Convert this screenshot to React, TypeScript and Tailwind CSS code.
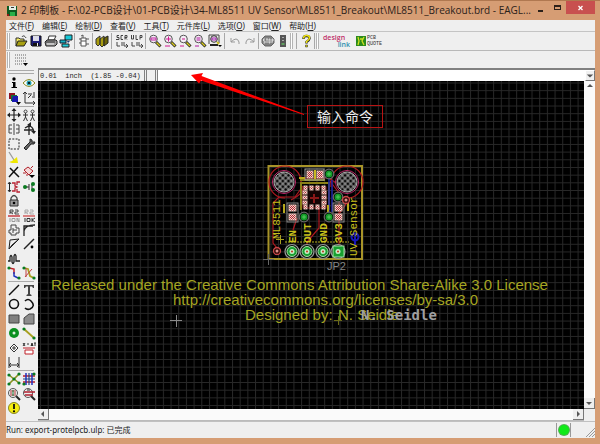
import type { FC, ReactNode } from "react";

type Glyph = { label: string; art: ReactNode };

const menus = [
  ["文件", "F"],
  ["编辑", "E"],
  ["绘制", "D"],
  ["查看", "V"],
  ["工具", "T"],
  ["元件库", "L"],
  ["选项", "O"],
  ["窗口", "W"],
  ["帮助", "H"],
];

const lens = (
  <>
    <path d="M8 8l4.5 4.5" stroke="#222" strokeWidth="3" />
    <path d="M8.5 8.5l3.5 3.5" stroke="#d8cc20" strokeWidth="1.4" />
    <circle cx="5.5" cy="5" r="3.8" fill="#f4eef6" stroke="#555" />
  </>
);

const fileTools: Glyph[] = [
  {
    label: "Open",
    art: (
      <>
        <path d="M2 12V4h3l1 1h4v2" fill="#f4ec60" stroke="#333" />
        <path d="M2 12l2-5h9l-3 5z" fill="#a8a010" stroke="#222" />
        <path d="M8 3c1-2 3-1 4 1" fill="none" stroke="#333" />
      </>
    ),
  },
  {
    label: "Save",
    art: (
      <>
        <path d="M2 2h10v10H3l-1-1z" fill="#1c1c78" stroke="#111" />
        <path d="M4 2h6v5H4z" fill="#dcdce8" />
        <path d="M4 9h6v3H4z" fill="#111" />
        <path d="M8 9h1v3H8z" fill="#eee" />
      </>
    ),
  },
  {
    label: "Print",
    art: (
      <>
        <path d="M4 6l1-4h7l-2 4z" fill="#fff" stroke="#333" />
        <path d="M1 8l2-2h9l1 1v3l-2 2H2z" fill="#999" stroke="#222" />
        <path d="M3 10h7" stroke="#eee" />
        <path d="M2 8h9" stroke="#333" />
      </>
    ),
  },
  {
    label: "CAM",
    art: (
      <>
        <path d="M6 1h7v5H6z" fill="#16c8d8" stroke="#222" />
        <path d="M1 6h6v3H1z" fill="#18b0c0" stroke="#123" />
        <path d="M3 10h7v3H3z" fill="#20d0dc" stroke="#222" />
        <path d="M8 7h3l-2 2z" fill="#103878" />
      </>
    ),
  },
];

const zoomTools: Glyph[] = [
  { label: "Fit", art: <>{lens}<path d="M3 4h5v2H3z" fill="none" stroke="#c020a0" /></> },
  { label: "Zoom in", art: <>{lens}<path d="M3 5h5M5.5 2.5v5M2 12h5" stroke="#d01890" /></> },
  { label: "Zoom out", art: <>{lens}<path d="M4 5h3M2 12h4" stroke="#d01890" /></> },
  { label: "Redraw", art: <>{lens}<path d="M3.5 4h4M3.5 6h4M2 12h4" stroke="#b018a0" /></> },
  {
    label: "Zoom select",
    art: (
      <>
        <path d="M1 10V1h10v8" fill="none" stroke="#444" />
        <circle cx="6" cy="5" r="3.3" fill="#eee" stroke="#333" />
        <path d="M4 4h4v2H4z" fill="none" stroke="#a020b0" />
        <path d="M2 11h8" stroke="#222" strokeWidth="2" />
        <path d="M9 8l2 2" stroke="#c8bc20" strokeWidth="2" />
        <path d="M10 11h4l-2 2z" />
      </>
    ),
  },
];

const node = (x: number, y: number, r = 1.6) => <circle cx={x} cy={y} r={r} fill="#0a7a20" />;

const infoTools: Glyph[] = [
  {
    label: "Info",
    art: <><circle cx="7" cy="3" r="1.7" /><path d="M5 6h3.500v5H10v1H4.500v-1H6V7H5z" /></>,
  },
  {
    label: "Show",
    art: (
      <>
        <path d="M1 7q6-7 12 0q-6 7-12 0z" fill="#fff" stroke="#8a8a20" />
        <circle cx="7" cy="7" r="2.5" fill="#20a0b0" />
        <circle cx="7" cy="7" r="1.1" />
      </>
    ),
  },
  {
    label: "Display",
    art: (
      <>
        <path d="M2 2h6v6H2z" fill="#901020" />
        <path d="M4 4h6v6H4z" fill="#107030" />
        <path d="M6 5h5v6H5V8z" fill="#1818b0" />
        <path d="M9 11h5l-2.500 3z" />
      </>
    ),
  },
  {
    label: "Mark",
    art: (
      <path
        d="M3 1v11h10M1 3l2-2 2 2M11 10l2 2-2 2M6 7l3-3M7 2v2M9 2v2M12 1v4M10 6h3"
        fill="none"
        stroke="#333"
      />
    ),
  },
];

const editTools: (Glyph | null)[] = [
  {
    label: "Move",
    art: (
      <>
        <path d="M7 2v10M2 7h10" stroke="#222" strokeWidth="1.2" />
        <path d="M7 0l2.500 3h-5zM7 14l2.500-3h-5zM0 7l3-2.500v5zM14 7l-3-2.500v5z" fill="#222" />
      </>
    ),
  },
  {
    label: "Copy",
    art: (
      <path
        d="M3.500 2a1.500 1.500 0 1 0 .1 0M10.500 2a1.500 1.500 0 1 0 .1 0M1 7h5M8 7h5M3.500 5v4l-2 4M3.500 9l2 4M10.500 5v4l-2 4M10.500 9l2 4"
        fill="none"
        stroke="#333"
      />
    ),
  },
  {
    label: "Mirror",
    art: <path d="M7 1v12M5 3H2v8h3M2 7h3M9 3h3v8H9M9 7h3" fill="none" stroke="#444" />,
  },
  {
    label: "Rotate",
    art: (
      <>
        <path d="M7 2v11M2 8h9M3 6q7-5 9 4" fill="none" stroke="#222" strokeWidth="1.3" />
        <path d="M5 3l4-3v5zM9 9h5l-2 3z" fill="#222" />
      </>
    ),
  },
  { label: "Group", art: <path d="M2 2h10v10H2z" fill="none" stroke="#222" strokeDasharray="2 1.3" /> },
  {
    label: "Change",
    art: <path d="M2 11l6-6V2l2 1 0 2 3 0-1 2H9l-5 6z" fill="#666" stroke="#222" />,
  },
  {
    label: "Paste",
    art: (
      <>
        <path d="M2 1l5 8" stroke="#999" strokeWidth="1.3" />
        <path d="M2 11l3-1 5-4 1 6H5z" fill="#f0e800" />
      </>
    ),
  },
  null,
  { label: "Delete", art: <path d="M3 3l9 9M11 2l-9 10" stroke="#111" strokeWidth="1.5" /> },
  {
    label: "Add",
    art: (
      <>
        <path d="M2 5l4-3 5 4-4 4zM1 8l3 0M5 11V9M9 3l2-2" fill="#f4d8d8" stroke="#b02028" />
        <path d="M7 10h6l-3 3z" />
      </>
    ),
  },
  {
    label: "Pin swap",
    art: (
      <>
        <path d="M2.500 3v8M1 4l1.500-2L4 4M1 10l1.500 2L4 10" fill="none" stroke="#222" />
        <path d="M5 3h3v3l2 1-2 1v3H5M13 2h-3v3M13 12h-3V9" fill="none" stroke="#b82030" strokeWidth="1.3" />
      </>
    ),
  },
  {
    label: "Replace",
    art: (
      <>
        <path d="M2 7h5M10 4v6M7 4v6" stroke="#555" strokeWidth="1.3" />
        {node(3, 7, 2)}
        {node(11, 4, 2)}
        {node(11, 10, 2)}
      </>
    ),
  },
  {
    label: "Lock",
    art: (
      <>
        <path d="M4 7V4q3-5 6 0v3" fill="none" stroke="#444" strokeWidth="1.3" />
        <path d="M3 6h8v6H3z" fill="#999" stroke="#333" />
        <circle cx="7" cy="9" r="1.3" />
      </>
    ),
  },
  null,
  {
    label: "Name",
    art: (
      <>
        <path d="M3 5V1h3v2H3l3 2M8 1h3v2H8v2h4" fill="none" stroke="#444" />
        <path d="M1 7h12" stroke="#c02028" strokeWidth="1.3" />
        <path d="M3 13V9M5 12.500V9.500h3v3zM10 13V9l2 4V9" fill="none" stroke="#999" />
      </>
    ),
  },
  {
    label: "Value",
    art: (
      <>
        <path d="M3 5V1h3v2H3l3 2M8 1h3v2H8v2h4" fill="none" stroke="#aaa" />
        <path d="M1 7h12" stroke="#d04848" strokeWidth="1.3" />
        <path d="M3 13V9M5 12.500V9.500h3v3zM10 9v4M13 9l-3 2 3 2" fill="none" stroke="#333" />
      </>
    ),
  },
  {
    label: "Smash",
    art: <path d="M4 4V2h5v3h3v5H9v2H4v-2H2V7h2zM6 7h4M6 5v5" fill="none" stroke="#444" />,
  },
  { label: "Miter", art: <path d="M2 13V8q1-6 11-6M2 13V3h9" fill="none" stroke="#222" strokeWidth="1.3" /> },
  {
    label: "Split",
    art: <path d="M2 12L3 3l9-1zM2 12l3-4 7-6" fill="none" stroke="#222" />,
  },
  {
    label: "Optimize",
    art: <><path d="M2 12L12 2" stroke="#222" strokeWidth="1.5" /><circle cx="10" cy="10" r="1.4" /></>,
  },
  {
    label: "Meander",
    art: <path d="M1 9h2V5q1-3 2 0v5q1 3 2 0V4q1-3 2 0v5h4" fill="none" stroke="#222" strokeWidth="1.3" />,
  },
  null,
  {
    label: "Route",
    art: (
      <>
        <path d="M2 2l5 1v5" fill="none" stroke="#c02028" strokeWidth="1.5" />
        <path d="M7 6v4l4 2" fill="none" stroke="#2038c0" strokeWidth="1.5" />
        {node(2, 2)}
        {node(12, 12)}
      </>
    ),
  },
  {
    label: "Ripup",
    art: (
      <>
        <path d="M2 2l4 1 2 7 4 2" fill="none" stroke="#a8a020" strokeWidth="1.8" />
        <path d="M4 2v9M10 3l-7 8" stroke="#c04040" />
        {node(2, 2)}
        {node(12, 12)}
      </>
    ),
  },
];

const drawTools: (Glyph | null)[] = [
  { label: "Wire", art: <path d="M2 12L12 2" stroke="#111" strokeWidth="1.5" /> },
  { label: "Text", art: <path d="M2 2h10v3h-1L10 3.500H8V11l1.500 1v1h-5v-1L6 11V3.500H4L3 5H2z" fill="#444" /> },
  { label: "Circle", art: <circle cx="7" cy="7" r="4.5" fill="none" stroke="#111" strokeWidth="1.6" /> },
  { label: "Arc", art: <path d="M3 4q3-3 6 0q5 5-1 8q-3 1-5-1" fill="none" stroke="#111" strokeWidth="1.6" /> },
  { label: "Rect", art: <path d="M2 3h10v8H2z" fill="#808080" stroke="#444" /> },
  { label: "Polygon", art: <path d="M2 12V6l5-4h5v10z" fill="#8c8c8c" stroke="#444" /> },
  {
    label: "Via",
    art: <><circle cx="7" cy="7" r="5" fill="#0a9020" /><circle cx="7" cy="7" r="1.5" fill="#dff0df" /></>,
  },
  {
    label: "Signal",
    art: <><path d="M2 3l10 9" stroke="#a8a020" strokeWidth="1.8" />{node(2, 3)}{node(12, 12)}</>,
  },
  {
    label: "Hole",
    art: <><path d="M7 3l4 4-4 4-4-4z" fill="#fff" stroke="#333" /><path d="M7 5v4M5 7h4" stroke="#333" /></>,
  },
  {
    label: "Attribute",
    art: (
      <>
        <path d="M1 2l2 3M1 5l2-3M5 3h2M9 5l1-3 1 3M12 2h2M13 2v3" stroke="#333" />
        <path d="M1 7h12" stroke="#c02028" />
        <path d="M3 9h8v4H3z" fill="#fff" stroke="#c02028" />
      </>
    ),
  },
  { label: "Dimension", art: <path d="M2 2v11M12 2v11M2 10h10M4 8l-2 2 2 2M10 8l2 2-2 2" fill="none" stroke="#333" /> },
  null,
];

const checkTools: (Glyph | null)[] = [
  {
    label: "Ratsnest",
    art: (
      <>
        <path d="M2 3l10 8M12 2L2 12" stroke="#8a9020" strokeWidth="1.6" />
        {node(2, 3)}
        {node(12, 2)}
        {node(2, 12)}
        {node(12, 11)}
        {node(7, 7)}
      </>
    ),
  },
  {
    label: "Auto",
    art: (
      <>
        <path d="M1 4h12M1 10h12" stroke="#c02028" strokeWidth="1.5" />
        <path d="M4 1v12M10 1v12" stroke="#2030c0" strokeWidth="1.5" />
        <path d="M7 1v12M1 7h12" stroke="#204890" strokeWidth="1.2" />
        {node(12, 2)}
        {node(2, 12)}
      </>
    ),
  },
  {
    label: "ERC",
    art: (
      <>
        <path d="M9 9l4 4" stroke="#222" strokeWidth="2" />
        <circle cx="6" cy="6" r="4.5" fill="#eee" stroke="#555" />
        <path d="M3 4h4M3 6h2M3 8h4M8 3v6" stroke="#b03038" />
        <path d="M6 3v6" stroke="#18803a" />
      </>
    ),
  },
  {
    label: "DRC",
    art: (
      <>
        <path d="M9 9l4 4" stroke="#222" strokeWidth="2" />
        <circle cx="6" cy="6" r="4.5" fill="#eee" stroke="#555" />
        <path d="M2 5h11M3 8h8" stroke="#b02030" strokeWidth="1.6" />
        <path d="M5 3h3" stroke="#222" />
      </>
    ),
  },
  {
    label: "Errors",
    art: (
      <>
        <circle cx="7" cy="7" r="5.5" fill="#f4ec10" stroke="#8a8820" />
        <path d="M7 3v5" stroke="#111" strokeWidth="1.8" />
        <circle cx="7" cy="10.3" r="1.1" />
      </>
    ),
  },
  null,
];

const ToolButton: FC<Glyph> = ({ label, art }) => (
  <button type="button" aria-label={label} className="flex h-3.5 w-[15px] items-center justify-center">
    <svg viewBox="0 0 14 14" className="size-3.5">
      {art}
    </svg>
  </button>
);

const Sep: FC<{ wide?: boolean }> = ({ wide }) => (
  <span className={wide ? "mx-0.5 h-4 w-px bg-[#a8a8a8]" : "mx-px h-4 w-px bg-[#a8a8a8]"} />
);

const Grip = () => <span className="h-4 w-[3px] border-x border-[#b4b4b4] bg-white" />;

const ToolGroup: FC<{ tools: (Glyph | null)[]; className: string }> = ({ tools, className }) => (
  <div className={`grid grid-cols-2 content-between ${className}`}>
    {tools.map((t, i) => (t ? <ToolButton key={t.label} {...t} /> : <span key={i} />))}
  </div>
);

const Via: FC<{ x: number; y: number }> = ({ x, y }) => (
  <g>
    <circle cx={x} cy={y} r="4.8" fill="#000" stroke="#6a6a6a" strokeWidth="1.2" />
    <circle cx={x} cy={y} r="3.5" fill="#129a28" />
    <path d={`M${x - 2} ${y}h4M${x} ${y - 2}v4`} stroke="#7adc7a" strokeWidth="0.6" />
  </g>
);

const Hole: FC<{ x: number; y: number }> = ({ x, y }) => (
  <g>
    <circle cx={x} cy={y} r="11.5" fill="#000" stroke="#c0286a" />
    <circle cx={x} cy={y} r="10" fill="url(#hatch)" stroke="#a8a8a8" />
  </g>
);

const Chip: FC<{ x: number; y: number; w: number; h: number }> = ({ x, y, w, h }) => (
  <g>
    <rect x={x} y={y} width={w} height={h} fill="#b8202a" stroke="#d8b8ac" />
    <rect x={x} y={y} width={w} height={h} fill="url(#weave)" />
  </g>
);

// Coordinates are in board space; the outer group moves them onto the canvas.
const Board = () => (
  <g transform="translate(-38 -81)">
    <rect x="268.5" y="166" width="93.5" height="93" fill="none" stroke="#a89428" strokeWidth="2" />
    <g fill="none" stroke="#b01820" strokeWidth="1.2">
      <path d="M285 198a16 16 0 1 1 16-16v5M347 198a16 16 0 1 0-16-16v5" />
      <path d="M277 248l-4-5v-40l6-6h16l8-11M339 245v-52l-9-12M319 208v20l-12 14v4M301 178h28l10 7" />
      <path d="M291 200q12-6 12-12M346 204l-7 10M297 218l-4 12" />
    </g>
    <path d="M301 210v-27h28v27M300 180h25" fill="none" stroke="#8a8018" strokeWidth="2" />
    <path d="M329 178v36M332 180v32" fill="none" stroke="#1820a8" strokeWidth="1.5" />
    <path d="M355 233v12" stroke="#1818b8" strokeWidth="2" />
    <circle cx="355" cy="237" r="3.5" fill="none" stroke="#1818b8" strokeWidth="2" />

    <Hole x={284} y={182} />
    <Hole x={347} y={182} />

    <rect x="303" y="187" width="23" height="21" fill="#140404" stroke="#8a1818" />
    {[304, 310, 316, 322].map((x) => (
      <g key={x}>
        <Chip x={x} y={186} w={3} h={4} />
        <Chip x={x} y={205} w={3} h={4} />
      </g>
    ))}
    {[191, 196, 201].map((y) => (
      <g key={y}>
        <Chip x={303} y={y} w={4} h={3} />
        <Chip x={322} y={y} w={4} h={3} />
      </g>
    ))}
    <path d="M314 194v9M310 198h9" stroke="#8a1818" strokeWidth="2" />
    <rect x="305" y="169" width="19" height="11" fill="none" stroke="#a0a0a0" />
    <Chip x={307} y={171} w={6} h={7} />
    <Chip x={317} y={171} w={6} h={7} />
    <path d="M315 170v9" stroke="#c8b820" strokeWidth="2" />
    <rect x="287" y="203" width="11" height="19" fill="none" stroke="#888" />
    <Chip x={289} y={205} w={7} h={6} />
    <Chip x={289} y={214} w={7} h={6} />
    <rect x="333" y="203" width="11" height="19" fill="none" stroke="#888" />
    <Chip x={335} y={205} w={7} h={6} />
    <Chip x={335} y={214} w={7} h={6} />
    <path d="M284 204v9M348 202v9M328 205v8M299 178h6" stroke="#b8a81c" strokeWidth="2" />

    <Via x={329} y={174} />
    <Via x={338} y={197} />
    <Via x={304} y={217} />
    <Via x={329} y={217} />
    {[
      [277, 251],
      [346, 200],
    ].map(([x, y]) => (
      <g key={x}>
        <circle cx={x} cy={y} r="3.5" fill="#300808" stroke="#c84848" strokeWidth="1.3" />
        <circle cx={x} cy={y} r="1.5" fill="#e09088" />
      </g>
    ))}

    <path d="M285 242h64" stroke="#b8b020" strokeDasharray="2 1" />
    {[292, 307, 323, 338].map((x) => (
      <g key={x}>
        <circle cx={x} cy="251.5" r="7" fill="#041004" stroke="#9a9a9a" strokeWidth="1.2" />
        {x === 338 ? (
          <rect x="333" y="246" width="11" height="11" fill="#18a030" stroke="#a8e0a8" />
        ) : (
          <circle cx={x} cy="251.5" r="5" fill="#18a030" stroke="#a8e0a8" />
        )}
        <circle cx={x} cy="251.5" r="2.5" fill="#c8ecc8" />
        <circle cx={x} cy="251.5" r="1" fill="#c03018" />
      </g>
    ))}

    <g fill="#c8c01c" fontFamily="'Liberation Mono', monospace" fontSize="11">
      <text transform="translate(280 239) rotate(-90)">ML8511</text>
      <text transform="translate(357 256) rotate(-90)">UV Sensor</text>
      <g fontWeight="bold">
        <text transform="translate(296 243) rotate(-90)">EN</text>
        <text transform="translate(311 243) rotate(-90)">OUT</text>
        <text transform="translate(327 243) rotate(-90)">GND</text>
        <text transform="translate(342 243) rotate(-90)">3V3</text>
      </g>
    </g>
    <text x="327" y="270" fill="#858585" fontFamily="'Liberation Sans', sans-serif" fontSize="11">
      JP2
    </text>
    <path d="M263 259.500h11M268.500 254v11" stroke="#666" />
    <path d="M276 239.500h8M280.500 235v9" stroke="#a8a020" />
    <path d="M170 320.500h12M176.500 315v12" stroke="#8a8a8a" />
    <path d="M334 320.500h8M338.500 316v9" stroke="#6a6a18" />

    <g fill="#a5a522" fontFamily="'Liberation Sans', Arial, sans-serif" fontSize="15">
      <text x="51" y="290">
        Released under the Creative Commons Attribution Share-Alike 3.0 License
      </text>
      <text x="173" y="305">http://creativecommons.org/licenses/by-sa/3.0</text>
      <text x="245" y="320">Designed by:</text>
      <text x="338" y="320">N. Seidle</text>
    </g>
    <text x="361" y="320" fill="#a0a0a0" fontFamily="'DejaVu Sans Mono', monospace" fontWeight="bold" fontSize="14">
      N. Seidle
    </text>
  </g>
);

const Canvas = () => (
  <svg className="min-w-0 flex-1 bg-black" role="img" aria-label="ML8511 Breakout board">
    <defs>
      <pattern id="grid" width="7.68" height="7.68" patternUnits="userSpaceOnUse" x="2" y="1.5">
        <path d="M0 0.500h7.680M0.500 0v7.680" stroke="#282828" />
      </pattern>
      <pattern id="hatch" width="4" height="4" patternUnits="userSpaceOnUse" patternTransform="rotate(45)">
        <rect width="4" height="4" fill="#080808" />
        <path d="M0 2h4M2 0v4" stroke="#b0b0b0" />
      </pattern>
      <pattern id="weave" width="2" height="2" patternUnits="userSpaceOnUse">
        <path d="M0 0h1v1H0zM1 1h1v1H1z" fill="#e8d8d0" />
      </pattern>
    </defs>
    <rect width="100%" height="100%" fill="url(#grid)" />
    <Board />
  </svg>
);

const Caret: FC<{ d: string }> = ({ d }) => (
  <svg viewBox="0 0 10 10" className="size-2.5">
    <path d={d} fill="#555" />
  </svg>
);

const TitleBar = () => (
  <header className="flex h-[19px] items-center">
    <svg viewBox="0 0 12 12" className="size-3">
      <path d="M1 1h10v10H1z" fill="#0c5a20" />
      <path d="M3 1h7v4H3z" fill="#e4ece4" />
      <path d="M4 7h5v4H4z" fill="#28b048" />
      <path d="M1 9h2v2H1z" fill="#901818" />
      <path d="M5 2h3v1H5z" fill="#333" />
    </svg>
    <h1 className="ml-[3px] min-w-0 flex-1 font-['Open_Sans','Noto_Sans_CJK_SC',sans-serif] text-[10px] leading-[19px] whitespace-nowrap text-[#2c211a]">
      2 印制板 - F:\02-PCB设计\01-PCB设计\34-ML8511 UV Sensor\ML8511_Breakout\ML8511_Breakout.brd - EAGL...
    </h1>
    <button type="button" aria-label="Minimize" className="flex h-4 w-4 items-center justify-center">
      <span className="h-0.5 w-[5px] bg-[#2c211a]" />
    </button>
    <button type="button" aria-label="Maximize" className="mb-1.5 flex h-3.5 w-[18px] items-center justify-center">
      <span className="h-[5px] w-[7px] border border-t-2 border-[#2c211a]" />
    </button>
    <button type="button" aria-label="Close" className="mb-1.5 h-[13px] w-[29px] bg-[#c8504f]">
      <svg viewBox="0 0 29 13" className="h-[13px] w-full">
        <path d="M12.500 5l4 4M16.500 5l-4 4" stroke="#fff" strokeWidth="1.3" />
      </svg>
    </button>
  </header>
);

const MainToolbar = () => (
  <div className="flex h-[19px] items-center border-b border-[#b8b8b8] pl-px">
    <Grip />
    <span className="w-[3px]" />
    {fileTools.map((t) => (
      <ToolButton key={t.label} {...t} />
    ))}
    <Sep />
    <ToolButton
      label="Schematic"
      art={<path d="M6 1v3M4 4h5v3H4zM4 7v5h5V7M2 5h2M2 9h2M9 5h3M9 10h3M4 2l2-1" fill="#fff" stroke="#555" />}
    />
    <Sep />
    <ToolButton
      label="Library"
      art={
        <>
          <path d="M1 5l4-3v8l-2 2-2-2zM5 5l4-3v9l-2 2-2-2z" fill="#a89c10" stroke="#333" />
          <path d="M9 4l4-2v7l-4 3z" fill="#6c6408" stroke="#222" />
        </>
      }
    />
    <Sep wide />
    <ToolButton
      label="Run script"
      art={<path d="M4 1.500H2v2h2v2H1M8 1.500H6v4h2M10 5.500v-4h2v2h-2l2 2M2 8v4h3M7 8v4M9 8v4h4M11 10l2 2-2 2" fill="none" stroke="#444" />}
    />
    <ToolButton
      label="Run ULP"
      art={<path d="M1.500 1v4h2V1M6 1v4.500h2M10 5.500v-4h2v2h-2M2 8v4h3M7 8v4M9 8v4h4M11 10l2 2-2 2" fill="none" stroke="#444" />}
    />
    <Sep />
    {zoomTools.map((t) => (
      <ToolButton key={t.label} {...t} />
    ))}
    <Sep wide />
    <ToolButton label="Undo" art={<path d="M3 4v4h4M3 8q6-6 8 0v2" fill="none" stroke="#999" />} />
    <ToolButton label="Redo" art={<path d="M11 4v4H7M11 8Q5 2 3 8v2" fill="none" stroke="#999" />} />
    <Sep />
    <ToolButton
      label="Stop"
      art={
        <>
          <path d="M4 2h6l3 3v4l-3 3H4L1 9V5z" fill="#808080" stroke="#666" />
          <path d="M4 5H2.500v2H4v2H2.500M5 5h2M6 5v4M8 5h1v4H8zM11 9V5h1v2h-1" fill="none" stroke="#eee" strokeWidth="0.8" />
        </>
      }
    />
    <ToolButton
      label="Go"
      art={
        <>
          <path d="M4 1h6v12H4z" fill="#555" />
          <path d="M6 3h2v1H6zM6 6h2v1H6z" fill="#aaa" />
          <path d="M5.500 9h3v2h-3z" fill="#60a060" />
        </>
      }
    />
    <Grip />
    <span className="w-0.5" />
    <Sep />
    <ToolButton
      label="Help"
      art={
        <>
          <path d="M4.500 5q0-3 3-3t3 2.500q0 1.500-3 3.500v1.500" fill="none" stroke="#222" strokeWidth="2.4" />
          <path d="M4.500 4.500q0-3 3-3t3 2.500q0 1.500-3 3.500V9" fill="none" stroke="#f0e410" strokeWidth="1.5" />
          <path d="M6.500 11h2v2h-2z" fill="#e0d410" stroke="#222" strokeWidth="0.5" />
        </>
      }
    />
    <Sep />
    <Grip />
    <button
      type="button"
      className="ml-1 flex w-[27px] flex-col items-start font-['Open_Sans',sans-serif] text-[7px] leading-[7px] font-semibold text-[#c03068]"
    >
      <span>design</span>
      <span className="self-end text-[#3090b0]">link</span>
    </button>
    <button type="button" className="ml-1.5 flex items-center gap-px">
      <svg viewBox="0 0 10 10" className="size-2.5">
        <path d="M0 0h10v10H0z" fill="#2a8a1c" />
        <path d="M2 1l1 4-1 4M8 1L6 5l2 4M4 3h3" fill="none" stroke="#d0e020" strokeWidth="1.3" />
      </svg>
      <span className="text-left font-['Liberation_Mono',monospace] text-[5px] leading-[6px] text-[#333]">
        PCB
        <br />
        QUOTE
      </span>
    </button>
  </div>
);

const CommandRow = () => (
  <div className="flex h-[13px] border-t-2 border-[#808080] bg-[#efefef]">
    <output className="w-[107px] border-x border-[#808080] pl-px font-['Liberation_Mono',monospace] text-[7px] leading-3 whitespace-pre text-[#222]">
      {"0.01  inch  (1.85 -0.04)"}
    </output>
    <span className="ml-px w-2.5 border-x border-[#808080]" />
    <input aria-label="Command" className="ml-px min-w-0 flex-1 border-l border-[#808080] bg-white text-[8px] outline-none" />
    <button type="button" aria-label="Command history" className="flex w-2.5 items-center justify-center border border-t-white border-r-[#777] border-b-[#777] border-l-white bg-[#f0f0f0]">
      <Caret d="M1 3h8L5 7z" />
    </button>
  </div>
);

const Callout = () => (
  <div className="pointer-events-none absolute top-1.5 left-[153px] flex items-start">
    <svg viewBox="0 0 116 44" className="h-11 w-[116px] overflow-visible">
      <path d="M0 1l12-2-1.500 3L113 40v1L10 6.500l-2 3z" fill="#f00" />
    </svg>
    <p className="mt-[31px] border border-[#b81414] px-[9px] font-['Noto_Sans_CJK_SC',sans-serif] text-[14px] leading-[21px] text-[#eee]">
      输入命令
    </p>
  </div>
);

const App: FC = () => (
  <main className="flex h-screen flex-col border-t border-[#b07850] bg-[#d69d74] pr-[5px] pb-1.5 pl-1.5 font-['Noto_Sans','Noto_Sans_CJK_SC',sans-serif]">
    <TitleBar />
    <div className="flex min-h-0 flex-1 flex-col bg-[#efefef]">
      <nav className="flex h-3 gap-2 border-b border-[#c4c4c4] pl-[3px] text-[8px] leading-[11px] text-[#222]">
        {menus.map(([name, key]) => (
          <button key={key} type="button" className="whitespace-nowrap">
            {name}(<u>{key}</u>)
          </button>
        ))}
      </nav>
      <MainToolbar />
      <div className="flex h-[17px] items-center pl-px">
        <Grip />
        <span className="w-[3px]" />
        <ToolButton
          label="Grid"
          art={
            <>
              <path d="M1 2h11M1 5h11M1 8h11M1 11h8" stroke="#666" strokeDasharray="1 1" />
              <path d="M9 10h5l-2.500 3z" />
            </>
          }
        />
      </div>

      <div className="flex min-h-0 flex-1">
        <aside className="w-8 shrink-0 pr-0.5">
          <hr className="mx-0.5 mt-0.5 border-[#aaa]" />
          <hr className="mx-0.5 my-0.5 border-[#aaa]" />
          <ToolGroup tools={infoTools} className="h-[29px]" />
          <hr className="mx-0.5 my-px border-[#aaa]" />
          <ToolGroup tools={editTools} className="h-[172px]" />
          <hr className="mx-0.5 my-px border-[#aaa]" />
          <ToolGroup tools={drawTools} className="h-[86px]" />
          <hr className="mx-0.5 my-px border-[#aaa]" />
          <ToolGroup tools={checkTools} className="h-[43px]" />
        </aside>

        <div className="relative flex min-w-0 flex-1 flex-col">
          <CommandRow />
          <div className="flex min-h-0 flex-1">
            <Canvas />
            <div className="flex w-[11px] flex-col items-center justify-between bg-[#fafafa]">
              <button type="button" aria-label="Scroll up">
                <Caret d="M2 6h6L5 3z" />
              </button>
              <button type="button" aria-label="Scroll down" className="border-r border-b border-[#777] bg-[#eee]">
                <Caret d="M2 4h6L5 7z" />
              </button>
            </div>
          </div>
          <div className="mr-[11px] flex h-3 items-center justify-between border-b border-[#bbb] bg-[#fafafa]">
            <button type="button" aria-label="Scroll left" className="border-r border-b border-[#777] bg-[#eee]">
              <Caret d="M6 2v6L3 5z" />
            </button>
            <button type="button" aria-label="Scroll right" className="border-r border-b border-[#777] bg-[#eee]">
              <Caret d="M4 2v6l3-3z" />
            </button>
          </div>
          <Callout />
        </div>
      </div>

      <footer className="flex h-[17px] items-center border-t border-[#c0c0c0] text-[8px] text-[#222]">
        <p className="flex-1">Run: export-protelpcb.ulp: 已完成</p>
        <span className="flex size-3.5 items-center justify-center border-l border-[#999]">
          <span className="size-2.5 rounded-full bg-[#10ea18] ring-1 ring-[#50b050]" />
        </span>
        <span className="flex h-3.5 w-[25px] items-end justify-end border-l border-[#999]">
          <svg viewBox="0 0 10 10" className="size-2.5">
            <path d="M1 10l9-9M4 10l6-6M7 10l3-3" stroke="#999" />
          </svg>
        </span>
      </footer>
    </div>
  </main>
);

export default App;
